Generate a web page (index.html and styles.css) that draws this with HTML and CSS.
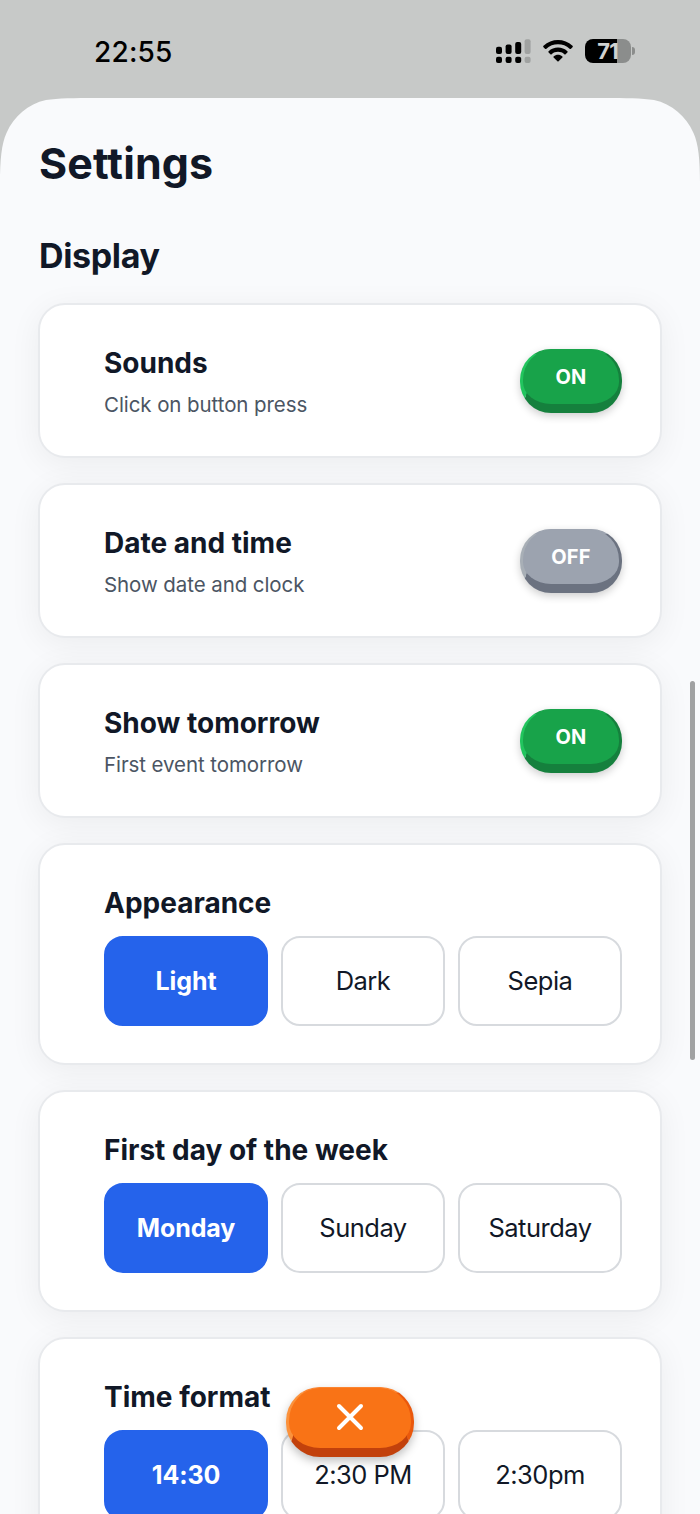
FILE: index.html
```html
<!DOCTYPE html>
<html lang="en">
<head>
<meta charset="utf-8">
<title>Settings</title>
<link rel="stylesheet" href="styles.css">
</head>
<body>
<div class="screen">
  <header class="status">
    <span class="clock">22:55</span>
    <div class="indicators">
      <svg class="signal" width="35" height="26" viewBox="0 0 35 26">
        <rect x="0" y="8.7" width="6" height="7.2" rx="2"/><rect x="9.6" y="6.4" width="6" height="9.5" rx="2"/><rect x="19.2" y="4" width="6" height="11.9" rx="2"/>
        <rect x="0" y="18.7" width="6" height="6.3" rx="2"/><rect x="9.6" y="18.7" width="6" height="6.3" rx="2"/><rect x="19.2" y="18.7" width="6" height="6.3" rx="2"/>
        <g class="dim"><rect x="28.6" y="1.2" width="6" height="14.7" rx="2"/><rect x="28.6" y="18.7" width="6" height="6.3" rx="2"/></g>
      </svg>
      <svg class="wifi" width="32" height="24" viewBox="0 0 32 24">
        <path d="M1.500 6.800C9.500-1.100 22.500-1.100 30.500 6.800Q31.200 7.500 30.500 8.200L29 9.700Q28.300 10.300 27.600 9.700C21.400 3.900 10.600 3.900 4.400 9.700Q3.700 10.300 3 9.700L1.500 8.200Q.8 7.500 1.500 6.800Z"/>
        <path d="M6.600 12.200C11.800 7.400 20.200 7.400 25.400 12.200Q26 12.800 25.400 13.500L23.600 15.200Q23 15.800 22.300 15.200C18.900 12 13.100 12 9.700 15.200Q9 15.800 8.400 15.200L6.600 13.500Q6 12.800 6.600 12.200Z"/>
        <path d="M11.600 17.400C14.100 15.300 17.900 15.300 20.400 17.400Q21 18 20.400 18.500L16.600 22.300Q16 22.900 15.400 22.300L11.600 18.500Q11 18 11.600 17.400Z"/>
      </svg>
      <div class="battery"><div class="cell">71</div><i class="cap"></i></div>
    </div>
  </header>
  <main class="sheet">
    <h1>Settings</h1>
    <h2>Display</h2>
    <div class="cards">
      <section class="card row">
        <div><h3>Sounds</h3><p>Click on button press</p></div>
        <button class="toggle on">ON</button>
      </section>
      <section class="card row">
        <div><h3>Date and time</h3><p>Show date and clock</p></div>
        <button class="toggle off">OFF</button>
      </section>
      <section class="card row">
        <div><h3>Show tomorrow</h3><p>First event tomorrow</p></div>
        <button class="toggle on">ON</button>
      </section>
      <section class="card">
        <h3>Appearance</h3>
        <div class="options"><button class="option selected">Light</button><button class="option">Dark</button><button class="option">Sepia</button></div>
      </section>
      <section class="card">
        <h3>First day of the week</h3>
        <div class="options"><button class="option selected">Monday</button><button class="option">Sunday</button><button class="option">Saturday</button></div>
      </section>
      <section class="card">
        <h3>Time format</h3>
        <div class="options"><button class="option selected">14:30</button><button class="option">2:30 PM</button><button class="option">2:30pm</button></div>
      </section>
    </div>
  </main>
  <i class="scrollbar"></i>
  <button class="close" aria-label="Close"><svg width="28" height="28" viewBox="0 0 28 28"><path d="M3 3L25 25M25 3L3 25"/></svg></button>
</div>
</body>
</html>
```
FILE: styles.css
```css
* { box-sizing: border-box; }
html, body { margin: 0; }
body { font-family: Inter, "Liberation Sans", sans-serif; color: #111827; }
h1, h2, h3, p { margin: 0; }
button { font: inherit; color: inherit; margin: 0; padding: 0; }

.screen { position: relative; width: 700px; height: 1514px; overflow: hidden; background: #c7c9c8; }

.status { height: 98px; padding: 0 65px 0 94px; display: flex; justify-content: space-between; align-items: flex-start; color: #000; }
.clock { margin-top: 35px; font-size: 28px; line-height: 34px; font-weight: 550; letter-spacing: 0.2px; }
.indicators { display: flex; align-items: flex-start; margin-top: 38px; }
.dim { fill: #a0a2a1; }
.wifi { margin-left: 11px; margin-top: 1px; }
.battery { display: flex; align-items: center; gap: 1px; margin-left: 11px; margin-top: 1px; }
.cell { width: 46px; height: 24px; padding-right: 1px; border-radius: 8px; background: linear-gradient(90deg, #000 32px, #8b8d8c 32px); color: #d0d2d1; font-size: 22px; line-height: 25px; font-weight: 700; letter-spacing: -1px; text-align: center; }
.cap { width: 3px; height: 8px; border-radius: 0 3px 3px 0; background: #8b8d8c; }

.sheet { height: 1416px; padding: 37px 38px 0; background: #f9fafc; clip-path: path("M0 1416V85C0 62 1.500 46 6.500 35C14 18 28 6 46 2C58 .3 75 0 95 0H605C625 0 642 .3 654 2C672 6 686 18 693.500 35C698.500 46 700 62 700 85V1416Z"); }
h1 { padding-left: 1px; font-size: 43px; line-height: 56px; font-weight: 700; letter-spacing: 0.1px; font-feature-settings: "calt" 0, "liga" 0; }
h2 { padding-left: 1px; margin-top: 43px; font-size: 34px; line-height: 44px; font-weight: 700; letter-spacing: -0.35px; }
.cards { display: grid; gap: 25px; margin-top: 25px; }
.card { height: 222px; padding: 41px 38px 0 64px; border: 2px solid #e8eaed; border-radius: 27px; background: #fff; box-shadow: 0 6px 32px rgba(0, 0, 0, .06); }
.row { height: 155px; display: flex; justify-content: space-between; }
h3 { font-size: 28px; line-height: 34px; font-weight: 700; letter-spacing: 0; }
p { margin-top: 11px; font-size: 20.500px; line-height: 28px; color: #4b5563; letter-spacing: -0.080px; }

.toggle { flex: none; width: 102px; height: 64px; margin-top: 3px; border-style: solid; border-width: 1px 3px 9px 3px; border-radius: 31px; color: #fff; font-size: 20px; line-height: 24px; font-weight: 700; letter-spacing: 0.2px; box-shadow: 0 3px 8px rgba(0, 0, 0, .2); }
.on { background: #18a34a; border-color: #18a34a #15803d #15803d #22c55e; }
.off { background: #9ca3af; border-color: #9ca3af #6b7280 #6b7280 #a8afb6; }

.options { display: grid; grid-template-columns: repeat(3, 1fr); gap: 13px; margin-top: 16px; }
.option { height: 90px; padding-bottom: 2px; border: 2px solid #d7dade; border-radius: 19px; background: #fff; font-size: 25.500px; font-weight: 400; letter-spacing: -0.5px; }
.selected { padding-bottom: 0; background: #2563eb; border-color: #2563eb; color: #fff; font-size: 25px; font-weight: 700; letter-spacing: -0.1px; }

.scrollbar { position: absolute; left: 690px; top: 681px; width: 5px; height: 379px; border-radius: 3px; background: #a0a1a2; }
.close { position: absolute; left: 286px; top: 1387px; width: 128px; height: 70px; padding-bottom: 2px; display: grid; place-items: center; border-style: solid; border-width: 1px 3px 9px 3px; border-color: #fb8430 #ea580c #c2410c #fb923c; border-radius: 34px; background: #f97316; box-shadow: 0 4px 10px rgba(0, 0, 0, .25); }
.close path { fill: none; stroke: #fff; stroke-width: 4; stroke-linecap: round; }
```
